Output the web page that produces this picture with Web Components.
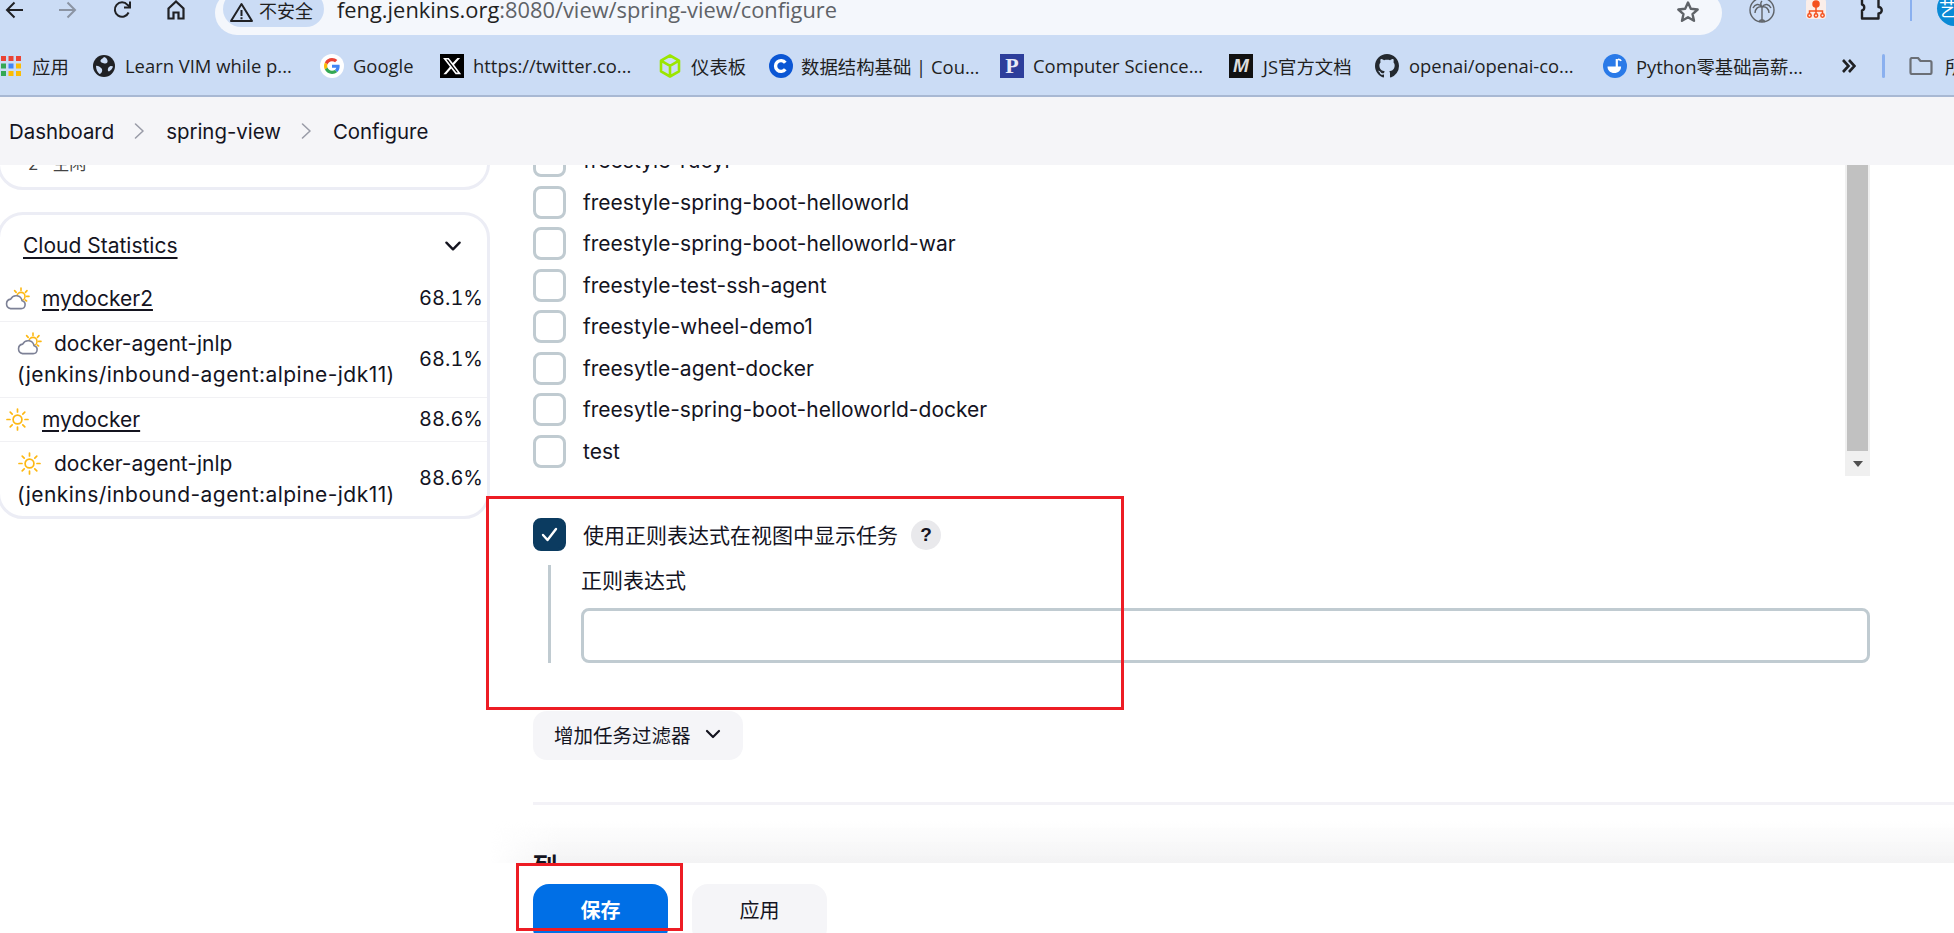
<!DOCTYPE html>
<html lang="zh">
<head>
<meta charset="utf-8">
<title>spring-view Config</title>
<style>
    html, body { margin: 0; height: 100%; overflow: hidden; background: #fff; }
    body { display: flex; flex-direction: column; font-family: Inter, "Noto Sans CJK SC", sans-serif; color: #14141f; }
</style>
</head>
<body>
<browser-toolbar></browser-toolbar>
<bookmark-bar>
    <book-mark icon="apps" gap="11" width="92">应用</book-mark>
    <book-mark icon="globe" gap="10" width="227">Learn VIM while p...</book-mark>
    <book-mark icon="google" gap="9" width="120">Google</book-mark>
    <book-mark icon="x" gap="9" width="219">https://twitter.co...</book-mark>
    <book-mark icon="box" gap="10" width="110">仪表板</book-mark>
    <book-mark icon="c" gap="8" width="231">数据结构基础 | Cou...</book-mark>
    <book-mark icon="p" gap="9" width="229">Computer Science...</book-mark>
    <book-mark icon="m" gap="10" width="146">JS官方文档</book-mark>
    <book-mark icon="github" gap="10" width="228">openai/openai-co...</book-mark>
    <book-mark icon="py" gap="9" width="220">Python零基础高薪...</book-mark>
</bookmark-bar>
<crumb-bar>
    <crumb-item>Dashboard</crumb-item>
    <crumb-item sep>spring-view</crumb-item>
    <crumb-item sep>Configure</crumb-item>
</crumb-bar>
<config-page>
    <side-panel slot="side"></side-panel>
    <view-form slot="main"></view-form>
    <action-bar slot="over"></action-bar>
    <mark-box slot="over" x="486" y="331" w="638" h="214"></mark-box>
    <mark-box slot="over" x="516" y="698" w="167" h="68"></mark-box>
</config-page>

<script>
(function () {
    const chevron = (size, color) => `<svg width="${size}" height="${size}" viewBox="0 0 20 20" fill="none" stroke="${color}" stroke-width="2.2" stroke-linecap="round" stroke-linejoin="round"><path d="M4 7l6 6 6-6"/></svg>`;

    const cloudSun = `<svg width="25" height="23" viewBox="0 0 25 23" fill="none">
        <g stroke="#fdb813" stroke-width="1.6" stroke-linecap="round"><path d="M16 1v2.5M9.6 3.6l1.6 1.8M22 3.6l-1.6 1.8M24 9.4h-2.4M21.6 14l-1.4-1"/></g>
        <circle cx="16" cy="9.4" r="4" stroke="#fdb813" stroke-width="1.6" fill="#fff"/>
        <path d="M5.6 21.6h10.6a4 4 0 0 0 .8-7.9 6 6 0 0 0-11.3-1.6A4.8 4.8 0 0 0 5.6 21.6z" fill="#fff" stroke="#7d8196" stroke-width="1.6" stroke-linejoin="round"/>
    </svg>`;

    const sun = `<svg width="25" height="23" viewBox="0 0 25 23" fill="none" stroke="#fdb813" stroke-width="1.7" stroke-linecap="round">
        <circle cx="12.5" cy="11.5" r="4.4"/>
        <path d="M12.5 1v3M12.5 19v3M2 11.5h3M20 11.5h3M5.2 4.2l2 2M17.8 16.8l2 2M19.8 4.2l-2 2M7.2 16.8l-2 2"/>
    </svg>`;

    const favicons = {
        apps: `<svg width="20" height="20" viewBox="0 0 20 20"><g>
            <rect x="0" y="0" width="5" height="5" fill="#ea4335"/><rect x="7.5" y="0" width="5" height="5" fill="#ea4335"/><rect x="15" y="0" width="5" height="5" fill="#ea4335"/>
            <rect x="0" y="7.5" width="5" height="5" fill="#34a853"/><rect x="7.5" y="7.5" width="5" height="5" fill="#4285f4"/><rect x="15" y="7.5" width="5" height="5" fill="#fbbc05"/>
            <rect x="0" y="15" width="5" height="5" fill="#34a853"/><rect x="7.5" y="15" width="5" height="5" fill="#fbbc05"/><rect x="15" y="15" width="5" height="5" fill="#fbbc05"/></g></svg>`,
        globe: `<svg width="22" height="22" viewBox="0 0 22 22"><circle cx="11" cy="11" r="11" fill="#202124"/>
            <path d="M11 2c-1 1.500-3 1.800-3.500 3.500S9.500 8 11.500 8.500 15 7.500 14.500 5.500 13 2.500 11 2zM3 11c1.500-.5 3 .5 4.500 1.500s2 2.500 1.500 4-1.500 2.500-2.500 2.500C4.500 17.500 3 14.500 3 11zM20 11.500c-1.500-1-3.500-.5-4.500 1s-1 3.500.5 4c1.800-1 3.500-2.800 4-5z" fill="#cbdcf5"/></svg>`,
        google: `<svg width="24" height="24" viewBox="0 0 24 24"><circle cx="12" cy="12" r="12" fill="#fff"/><g transform="translate(4 4) scale(.3333)">
            <path fill="#ea4335" d="M24 9.500c3.540 0 6.710 1.220 9.210 3.600l6.850-6.850C35.900 2.380 30.470 0 24 0 14.620 0 6.510 5.380 2.560 13.220l7.980 6.190C12.430 13.720 17.740 9.500 24 9.500z"/>
            <path fill="#4285f4" d="M46.980 24.550c0-1.570-.15-3.090-.38-4.550H24v9.020h12.940c-.58 2.960-2.260 5.480-4.780 7.180l7.730 6c4.510-4.180 7.090-10.360 7.090-17.650z"/>
            <path fill="#fbbc05" d="M10.530 28.590c-.48-1.450-.76-2.990-.76-4.590s.27-3.140.76-4.590l-7.980-6.190C.92 16.460 0 20.120 0 24c0 3.880.92 7.540 2.560 10.780l7.970-6.190z"/>
            <path fill="#34a853" d="M24 48c6.480 0 11.930-2.130 15.890-5.810l-7.730-6c-2.150 1.450-4.920 2.300-8.160 2.300-6.260 0-11.570-4.220-13.470-9.910l-7.980 6.190C6.510 42.620 14.620 48 24 48z"/></g></svg>`,
        x: `<svg width="24" height="24" viewBox="0 0 24 24"><rect width="24" height="24" fill="#000"/><path transform="translate(2 2) scale(.84)" fill="#fff" d="M18.244 2.250h3.308l-7.227 8.260 8.502 11.240H16.170l-5.214-6.817L4.990 21.750H1.680l7.730-8.835L1.254 2.250H8.080l4.713 6.231zm-1.161 17.520h1.833L7.084 4.126H5.117z"/></svg>`,
        box: `<svg width="22" height="24" viewBox="0 0 22 24" fill="none" stroke="#9be600" stroke-width="2.600" stroke-linejoin="round"><path d="M11 1.500l9 5.200v10.600l-9 5.200-9-5.200V6.700zM2 6.700l9 5.200 9-5.200M11 11.900v10.600"/></svg>`,
        c: `<svg width="24" height="24" viewBox="0 0 24 24"><circle cx="12" cy="12" r="12" fill="#0b56d4"/><path d="M16.300 8.800a5.400 5.400 0 1 0 0 6.400" fill="none" stroke="#fff" stroke-width="3.400"/></svg>`,
        github: `<svg width="24" height="24" viewBox="0 0 16 16"><path fill="#24292f" d="M8 0C3.580 0 0 3.580 0 8c0 3.540 2.290 6.530 5.470 7.590.4.070.55-.17.55-.38 0-.19-.01-.82-.01-1.490-2.010.37-2.530-.49-2.690-.94-.09-.23-.48-.94-.82-1.130-.28-.15-.68-.52-.01-.53.63-.01 1.080.58 1.230.82.72 1.210 1.870.87 2.330.66.070-.52.28-.87.51-1.070-1.780-.2-3.640-.89-3.640-3.950 0-.87.31-1.590.82-2.150-.08-.2-.36-1.020.08-2.120 0 0 .67-.21 2.200.82.64-.18 1.320-.27 2-.27.68 0 1.360.09 2 .27 1.530-1.040 2.200-.82 2.200-.82.44 1.100.16 1.920.08 2.120.51.56.82 1.270.82 2.150 0 3.070-1.870 3.750-3.650 3.950.29.25.54.73.54 1.480 0 1.070-.01 1.930-.01 2.200 0 .21.15.46.55.38A8.013 8.013 0 0016 8c0-4.420-3.580-8-8-8z"/></svg>`,
        py: `<svg width="24" height="24" viewBox="0 0 24 24"><circle cx="12" cy="12" r="12" fill="#2a7ae8"/><path d="M4.500 12.500h8.200V5h2.200v7.500h3.200c0 4-2.800 6.500-6.800 6.500S4.500 16.500 4.500 12.500z" fill="#fff"/><path d="M15 5.400c1.500 0 2.600.5 3.200 1.500" fill="none" stroke="#fff" stroke-width="1.600"/></svg>`
    };

    customElements.define('browser-toolbar', class extends HTMLElement {
        constructor() {
            super();
            this.attachShadow({mode: 'open'}).innerHTML = `
                <style>
                    :host { display: flex; align-items: flex-start; height: 35px; flex: none; overflow: hidden; background: #cbdcf5; padding-left: 5px; box-sizing: border-box; font-family: "Open Sans", "Noto Sans CJK SC", sans-serif; color: #1f1f1f; }
                    .nav { display: flex; gap: 36px; margin-top: 1px; flex: none; }
                    .nav svg { display: block; }
                    .pill { flex: none; width: 1507px; height: 44px; margin: -9px 0 0 30px; box-sizing: border-box; border-radius: 24px; background: #f4f7fc; display: flex; align-items: flex-start; padding: 0 22px 0 8px; }
                    .badge { flex: none; width: 101px; height: 36px; border-radius: 18px; background: #cbdcf5; display: flex; align-items: flex-start; gap: 6px; padding: 9px 0 0 7px; box-sizing: border-box; font-size: 18px; }
                    .badge svg { margin-top: 2px; flex: none; }
                    .badge span { font-family: "Noto Sans CJK SC", sans-serif; line-height: 20px; }
                    .url { flex: 1; margin: 9px 0 0 13px; font-size: 21.85px; line-height: 20px; color: #5f6368; white-space: nowrap; }
                    .url b { font-weight: 400; color: #1f1f1f; }
                    .star { margin-top: 9px; flex: none; }
                    .ext { display: flex; align-items: flex-start; flex: none; }
                    .ext > * { flex: none; display: block; }
                    .sep { width: 2px; height: 21px; background: #8ab0ef; margin-left: 26px; }
                    .avatar { width: 35px; height: 35px; border-radius: 50%; background: #0a8ad6; color: #fff; margin: -9px 0 0 25px; font-size: 18px; line-height: 35px; padding-left: 2px; box-sizing: border-box; font-family: "Noto Sans CJK SC", sans-serif; white-space: nowrap; overflow: hidden; }
                </style>
                <div class="nav">
                    <svg width="18" height="18" viewBox="0 0 18 18" fill="none" stroke="#202124" stroke-width="2"><path d="M18 9H2M9.500 1.500L2 9l7.500 7.500"/></svg>
                    <svg width="18" height="18" viewBox="0 0 18 18" fill="none" stroke="#8b94a3" stroke-width="2"><path d="M0 9h16M8.500 1.500L16 9l-7.500 7.500"/></svg>
                    <svg width="18" height="18" viewBox="0 0 18 18" fill="none" stroke="#202124" stroke-width="2"><path d="M15.600 11.500A7.200 7.200 0 1 1 14.500 3.800L17 6.200"/><path d="M17 .5v6h-6" stroke-width="2"/></svg>
                    <svg width="18" height="20" viewBox="0 0 18 20" fill="none" stroke="#202124" stroke-width="2.200" style="margin-top:-1px"><path d="M1.500 8.500L9 1.500l7.500 7v10h-5v-6h-5v6h-5z"/></svg>
                </div>
                <div class="pill">
                    <div class="badge">
                        <svg width="23" height="20" viewBox="0 0 23 20" fill="none" stroke="#202124" stroke-width="2" stroke-linejoin="round"><path d="M11.500 2L22 19H1z"/><path d="M11.500 8v6M11.500 15.200v2"/></svg>
                        <span>不安全</span>
                    </div>
                    <div class="url"><b>feng.jenkins.org</b>:8080/view/spring-view/configure</div>
                    <svg class="star" width="24" height="23" viewBox="0 0 24 23" fill="none" stroke="#5f6368" stroke-width="2.400" stroke-linejoin="round"><path d="M12 2.500l2.800 6.300 6.900.7-5.200 4.600 1.500 6.700L12 17.300l-6 3.500 1.500-6.700-5.200-4.600 6.900-.7z"/></svg>
                </div>
                <div class="ext">
                    <svg style="margin-left:27px" width="26" height="24" viewBox="0 0 26 24" fill="none" stroke="#5f6368" stroke-width="1.400"><circle cx="13" cy="10" r="12"/><path d="M13 7v15M13 7C10 3 6 4 4 8M13 7c3-4 7-3 9 1M13 7C9 6 6 9 6 13M13 7c4-1 7 2 7 6M13 7c-2-3-1-5 0-6M10 22c1-3 5-3 6 0" /></svg>
                    <svg style="margin-left:31px" width="20" height="20" viewBox="0 0 20 20"><rect width="20" height="20" y="-1" rx="3" fill="#fbeee9"/><g fill="none" stroke="#f4511e" stroke-width="1.500"><circle cx="10" cy="4" r="3" fill="#f4511e"/><path d="M10 7v4M3.500 14v-3h13v3M10 11v3"/><circle cx="3.500" cy="15.500" r="1.700"/><circle cx="10" cy="15.500" r="1.700"/><circle cx="16.500" cy="15.500" r="1.700"/></g></svg>
                    <svg style="margin-left:34px" width="24" height="20" viewBox="0 0 24 20" fill="none" stroke="#202124" stroke-width="2.400" stroke-linejoin="round"><path d="M2 -2v6.500a3 3 0 0 1 0 5.800V18.500h16.500v-5a3 3 0 0 0 0-6.500V-2"/></svg>
                    <div class="sep"></div>
                    <div class="avatar">艺术</div>
                </div>`;
        }
    });

    customElements.define('bookmark-bar', class extends HTMLElement {
        constructor() {
            super();
            this.attachShadow({mode: 'open'}).innerHTML = `
                <style>
                    :host { display: flex; align-items: center; height: 62px; box-sizing: border-box; flex: none; background: #cbdcf5; border-bottom: 2px solid #a8b8d3; padding: 1px 0 0 1px; overflow: hidden; font-family: "Open Sans", "Noto Sans CJK SC", sans-serif; font-size: 18.4px; color: #1f1f1f; white-space: nowrap; }
                    .more { flex: none; display: block; position: absolute; left: 1842px; top: 58px; }
                    .end { position: absolute; left: 1882px; top: 53px; display: flex; align-items: center; }
                    .sep { width: 3px; height: 24px; border-radius: 2px; background: #8ab0ef; }
                    .end svg { margin-left: 24px; }
                    .end span { margin-left: 12px; }
                </style>
                <slot></slot>
                <svg class="more" width="14" height="16" viewBox="0 0 14 16" fill="none" stroke="#202124" stroke-width="2.600"><path d="M1 2l5.500 6L1 14M7 2l5.500 6L7 14"/></svg>
                <div class="end">
                    <div class="sep"></div>
                    <svg width="24" height="18" viewBox="0 0 24 18" fill="none" stroke="#6b6f76" stroke-width="2.200" stroke-linejoin="round"><path d="M1.500 2.500a1.500 1.500 0 0 1 1.500-1.500h6l2.500 3H21a1.500 1.500 0 0 1 1.500 1.500V15.500a1.500 1.500 0 0 1-1.500 1.500H3a1.500 1.500 0 0 1-1.500-1.500z"/></svg>
                    <span>所有书签</span>
                </div>`;
        }
    });

    customElements.define('book-mark', class extends HTMLElement {
        constructor() {
            super();
            let icon = this.getAttribute('icon');
            let glyph = favicons[icon] || '';
            if (icon == 'p') glyph = `<span class="tile" style="background:#2d3e9b;font:700 22px/24px 'Liberation Serif',serif;color:#e8ebf8">P</span>`;
            if (icon == 'm') glyph = `<span class="tile" style="background:#111;font:italic 700 19px/24px 'Liberation Sans',sans-serif;color:#ddd">M</span>`;
            this.attachShadow({mode: 'open'}).innerHTML = `
                <style>
                    :host { display: flex; align-items: center; flex: none; width: ${this.getAttribute('width')}px; }
                    .ico { display: flex; margin-right: ${this.getAttribute('gap')}px; }
                    .tile { display: block; width: 24px; height: 24px; text-align: center; }
                    svg { display: block; }
                </style>
                <span class="ico">${glyph}</span><slot></slot>`;
        }
    });

    customElements.define('crumb-bar', class extends HTMLElement {
        constructor() {
            super();
            this.attachShadow({mode: 'open'}).innerHTML = `
                <style>
                    :host { display: flex; align-items: center; height: 68px; flex: none; box-sizing: border-box; padding: 0 0 0 9px; background: #f5f5f8; font-size: 20.4px; color: #14141f; white-space: nowrap; }
                </style>
                <slot></slot>`;
        }
    });

    customElements.define('crumb-item', class extends HTMLElement {
        constructor() {
            super();
            let sep = this.hasAttribute('sep') ? `<svg width="11" height="18" viewBox="0 0 11 18" fill="none" stroke="#9a9ca8" stroke-width="1.600" stroke-linecap="round" stroke-linejoin="round"><path d="M1.500 2l7.500 7-7.500 7"/></svg>` : '';
            this.attachShadow({mode: 'open'}).innerHTML = `
                <style>
                    :host { display: flex; align-items: center; flex: none; }
                    svg { margin: 0 21px 0 20px; display: block; }
                </style>
                ${sep}<slot></slot>`;
        }
    });

    customElements.define('config-page', class extends HTMLElement {
        constructor() {
            super();
            this.attachShadow({mode: 'open'}).innerHTML = `
                <style>
                    :host { display: grid; grid-template-columns: 490px 1fr; flex: 1; min-height: 0; position: relative; overflow: hidden; background: #fff; }
                </style>
                <slot name="side"></slot><slot name="main"></slot><slot name="over"></slot>`;
        }
    });

    customElements.define('side-card', class extends HTMLElement {
        constructor() {
            super();
            this.attachShadow({mode: 'open'}).innerHTML = `
                <style>
                    :host { display: block; border: 3px solid #ecedf5; border-radius: 26px; margin-left: -3px; background: #fff; }
                </style>
                <slot></slot>`;
        }
    });

    customElements.define('cloud-row', class extends HTMLElement {
        constructor() {
            super();
            let icon = this.getAttribute('weather') == 'sun' ? sun : cloudSun;
            let node = this.hasAttribute('node');
            let name = this.getAttribute('name');
            let sub = this.getAttribute('sub');
            this.attachShadow({mode: 'open'}).innerHTML = `
                <style>
                    :host { display: flex; align-items: center; justify-content: space-between; box-sizing: border-box; padding: 0 4px 0 ${node ? 17 : 5}px; border-bottom: 1.5px solid #f1f1f4; font-size: 21px; line-height: 31px; color: #14141f; white-space: nowrap; }
                    :host([last]) { border-bottom: 0; }
                    .first { display: flex; align-items: center; }
                    .sub { letter-spacing: .45px; }
                    .pct { font-size: 20px; font-variant-numeric: tabular-nums; }
                    svg { flex: none; margin-right: 12px; }
                    a { color: inherit; text-decoration: underline; text-underline-offset: 3px; }
                </style>
                <div>
                    <div class="first">${icon}${node ? `<span>${name}</span>` : `<a>${name}</a>`}</div>
                    ${sub ? `<div class="sub">${sub}</div>` : ''}
                </div>
                <div class="pct">${this.getAttribute('pct')}</div>`;
        }
    });

    customElements.define('side-panel', class extends HTMLElement {
        constructor() {
            super();
            this.attachShadow({mode: 'open'}).innerHTML = `
                <style>
                    :host { display: block; margin-top: -38px; }
                    .idle { height: 57px; box-sizing: border-box; padding: 22px 0 0 28px; font-size: 17px; line-height: 24px; color: #444; display: flex; gap: 14px; }
                    .second { margin-top: 22px; }
                    .head { display: flex; align-items: center; justify-content: space-between; height: 61px; padding: 0 23px 0 23px; font-size: 21px; }
                    .head a { text-decoration: underline; text-underline-offset: 4px; }
                    .head svg { display: block; }
                    .r1 { height: 46px; } .r2 { height: 75.500px; } .r3 { height: 44px; } .r4 { height: 74px; }
                </style>
                <side-card><div class="idle"><span>2</span><span>空闲</span></div></side-card>
                <side-card class="second">
                    <div class="head"><a>Cloud Statistics</a>${chevron(22, '#14141f')}</div>
                    <cloud-row class="r1" weather="cloud" name="mydocker2" pct="68.1%"></cloud-row>
                    <cloud-row class="r2" node weather="cloud" name="docker-agent-jnlp" sub="(jenkins/inbound-agent:alpine-jdk11)" pct="68.1%"></cloud-row>
                    <cloud-row class="r3" weather="sun" name="mydocker" pct="88.6%"></cloud-row>
                    <cloud-row class="r4" node last weather="sun" name="docker-agent-jnlp" sub="(jenkins/inbound-agent:alpine-jdk11)" pct="88.6%"></cloud-row>
                </side-card>`;
        }
    });

    customElements.define('check-box', class extends HTMLElement {
        constructor() {
            super();
            let on = this.hasAttribute('checked');
            this.attachShadow({mode: 'open'}).innerHTML = `
                <style>
                    :host { display: block; width: 33px; height: 33px; flex: none; box-sizing: border-box; border-radius: 8px; border: 3px solid ${on ? '#0b3b60' : '#c0cbd1'}; background: ${on ? '#0b3b60' : '#fff'}; }
                    svg { display: block; margin: 5px; }
                </style>
                ${on ? '<svg width="17" height="17" viewBox="0 0 17 17" fill="none" stroke="#fff" stroke-width="2.400" stroke-linecap="round" stroke-linejoin="round"><path d="M2 9l4.500 5L15 3"/></svg>' : ''}`;
        }
    });

    customElements.define('job-row', class extends HTMLElement {
        constructor() {
            super();
            this.attachShadow({mode: 'open'}).innerHTML = `
                <style>
                    :host { display: flex; align-items: center; gap: 17px; height: 41.500px; font-size: 21px; color: #14141f; }
                </style>
                <check-box></check-box><slot></slot>`;
        }
    });

    customElements.define('job-list', class extends HTMLElement {
        constructor() {
            super();
            this.attachShadow({mode: 'open'}).innerHTML = `
                <style>
                    :host { display: flex; height: 311px; overflow: hidden; }
                    .rows { flex: 1; margin-top: -25px; }
                    .bar { flex: none; width: 25px; display: flex; flex-direction: column; background: #f0f0f0; }
                    .thumb { flex: 1; margin: 0 2px; background: #c1c1c1; }
                    .down { height: 25px; display: flex; align-items: center; justify-content: center; }
                    .down i { width: 0; height: 0; border: 5.500px solid transparent; border-top: 6px solid #505050; border-bottom: 0; }
                </style>
                <div class="rows"><slot></slot></div>
                <div class="bar"><div class="thumb"></div><div class="down"><i></i></div></div>`;
        }
    });

    customElements.define('view-form', class extends HTMLElement {
        constructor() {
            super();
            let jobs = ['freestyle-ruoyi', 'freestyle-spring-boot-helloworld', 'freestyle-spring-boot-helloworld-war', 'freestyle-test-ssh-agent', 'freestyle-wheel-demo1', 'freesytle-agent-docker', 'freesytle-spring-boot-helloworld-docker', 'test'];
            this.attachShadow({mode: 'open'}).innerHTML = `
                <style>
                    :host { display: block; padding-left: 43px; min-width: 0; font-size: 20px; }
                    .list { margin-right: 84px; }
                    .regex { display: flex; align-items: center; gap: 17px; margin-top: 42px; height: 33px; }
                    .regex .cn { font-size: 21px; position: relative; top: -1px; }
                    .help { width: 30px; height: 30px; border-radius: 50%; background: #e9e9ec; margin-left: -4px; text-align: center; font: 700 19px/30px "Liberation Sans", sans-serif; }
                    .nested { margin: 14px 84px 0 15px; border-left: 3px solid #c0cbd1; padding-left: 30px; height: 98px; }
                    .nested label { display: block; font-size: 21px; line-height: 32px; }
                    .field { box-sizing: border-box; height: 55px; margin-top: 11px; border: 3px solid #c0cbd1; border-radius: 8px; background: #fff; }
                    .add { display: inline-flex; align-items: center; gap: 12px; box-sizing: border-box; width: 210px; height: 49px; padding: 0 0 3px 21px; margin-top: 48px; border-radius: 14px; background: #f5f5f8; font-size: 19.500px; }
                    .add svg { display: block; }
                    hr { border: 0; height: 3px; background: #f3f2f7; margin: 42px 0 0; }
                    h2 { margin: 46px 0 0; height: 12px; overflow: hidden; position: relative; z-index: 1; font-size: 24px; line-height: 32px; font-weight: 700; }
                </style>
                <job-list class="list">${jobs.map(j => `<job-row>${j}</job-row>`).join('')}</job-list>
                <div class="regex"><check-box checked></check-box><span class="cn">使用正则表达式在视图中显示任务</span><div class="help">?</div></div>
                <div class="nested"><label>正则表达式</label><div class="field"></div></div>
                <div class="add"><span>增加任务过滤器</span>${chevron(20, '#14141f')}</div>
                <hr>
                <h2>列</h2>`;
        }
    });

    customElements.define('action-bar', class extends HTMLElement {
        constructor() {
            super();
            this.attachShadow({mode: 'open'}).innerHTML = `
                <style>
                    :host { display: flex; gap: 24px; position: absolute; left: 490px; right: 0; bottom: 0; height: 70px; box-sizing: border-box; padding: 21px 0 0 43px; background: #fff; font-size: 20px; }
                    :host::before { content: ""; position: absolute; left: 0; right: 0; top: -42px; height: 42px; background: linear-gradient(to bottom, rgba(243,243,244,0) 0, rgba(243,243,244,1) 100%); -webkit-mask-image: linear-gradient(to right, transparent 0, #000 70px); }
                    .btn { flex: none; width: 135px; height: 60px; box-sizing: border-box; padding-top: 12px; border-radius: 16px; text-align: center; line-height: 30px; background: #f5f5f8; }
                    .save { background: #006fe6; color: #fff; font-weight: 700; }
                </style>
                <div class="btn save">保存</div>
                <div class="btn">应用</div>`;
        }
    });

    customElements.define('mark-box', class extends HTMLElement {
        constructor() {
            super();
            let a = n => this.getAttribute(n);
            this.attachShadow({mode: 'open'}).innerHTML = `
                <style>
                    :host { display: block; position: absolute; left: ${a('x')}px; top: ${a('y')}px; width: ${a('w')}px; height: ${a('h')}px; box-sizing: border-box; border: 3px solid #ed1c24; pointer-events: none; z-index: 2; }
                </style>`;
        }
    });
})();
</script>
</body>
</html>
